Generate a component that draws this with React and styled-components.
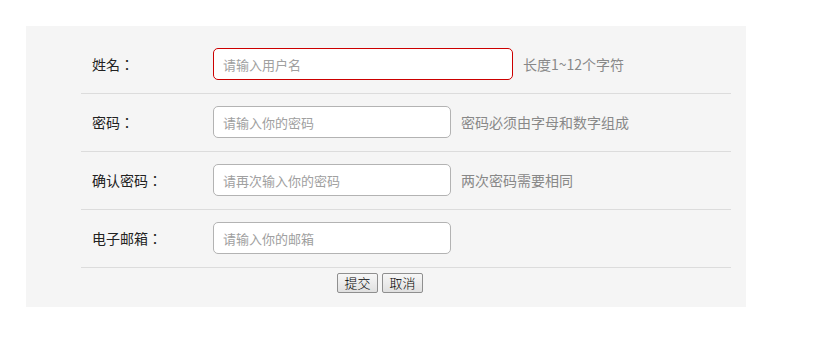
import React from 'react';
import styled, { createGlobalStyle } from 'styled-components';

const GlobalStyle = createGlobalStyle`
    html, body {
        margin: 0;
        padding: 0;
        background: #fff;
        font-family: "Noto Sans CJK SC", "Noto Sans", sans-serif;
    }
`;

const Page = styled.div`
    padding: 26px;
`;

const Panel = styled.form`
    width: 720px;
    box-sizing: border-box;
    background: #f5f5f5;
    padding: 10px 15px 14px 55px;
`;

const Row = styled.div`
    display: flex;
    align-items: center;
    height: 58px;
    padding-bottom: 1px;
    box-sizing: border-box;
    border-bottom: 1px solid #dcdcdc;
`;

const Label = styled.label`
    width: 132px;
    box-sizing: border-box;
    padding-left: 11px;
    font-family: "Noto Sans CJK TC", "Noto Sans CJK SC", sans-serif;
    font-size: 14px;
    color: #222;
`;

const Input = styled.input`
    width: ${props => props.wide ? '300px' : '238px'};
    height: 32px;
    box-sizing: border-box;
    margin: 0;
    padding: 0 9px;
    border: 1px solid ${props => props.error ? '#cc0000' : '#b3b3b3'};
    border-radius: 5px;
    background: #fff;
    font-family: "Noto Sans CJK SC", sans-serif;
    font-size: 13px;
    outline: none;

    &::placeholder {
        color: #a0a0a0;
    }
`;

const Hint = styled.span`
    margin-left: 10px;
    font-size: 14px;
    color: #888;
`;

const Actions = styled.div`
    display: flex;
    gap: 4px;
    padding: 5px 0 0 256px;
`;

const Button = styled.button`
    width: 41px;
    height: 20px;
    margin: 0;
    padding: 0;
    box-sizing: border-box;
    border: 1px solid #8f8f8f;
    border-radius: 2px;
    background: linear-gradient(#f7f7f7, #e0e0e0);
    font-family: "Noto Sans CJK SC", sans-serif;
    font-size: 13px;
    font-weight: 300;
    line-height: 16px;
    color: #000;
`;

const fields = [
    { label: '姓名：', placeholder: '请输入用户名', hint: '长度1~12个字符', wide: true, error: true },
    { label: '密码：', placeholder: '请输入你的密码', hint: '密码必须由字母和数字组成' },
    { label: '确认密码：', placeholder: '请再次输入你的密码', hint: '两次密码需要相同' },
    { label: '电子邮箱：', placeholder: '请输入你的邮箱' },
];

export default function App() {
    return (
        <Page>
            <GlobalStyle />
            <Panel onSubmit={e => e.preventDefault()}>
                {fields.map(f => (
                    <Row key={f.label}>
                        <Label>{f.label}</Label>
                        <Input placeholder={f.placeholder} wide={f.wide} error={f.error} />
                        {f.hint && <Hint>{f.hint}</Hint>}
                    </Row>
                ))}
                <Actions>
                    <Button type="submit">提交</Button>
                    <Button type="button">取消</Button>
                </Actions>
            </Panel>
        </Page>
    );
}
